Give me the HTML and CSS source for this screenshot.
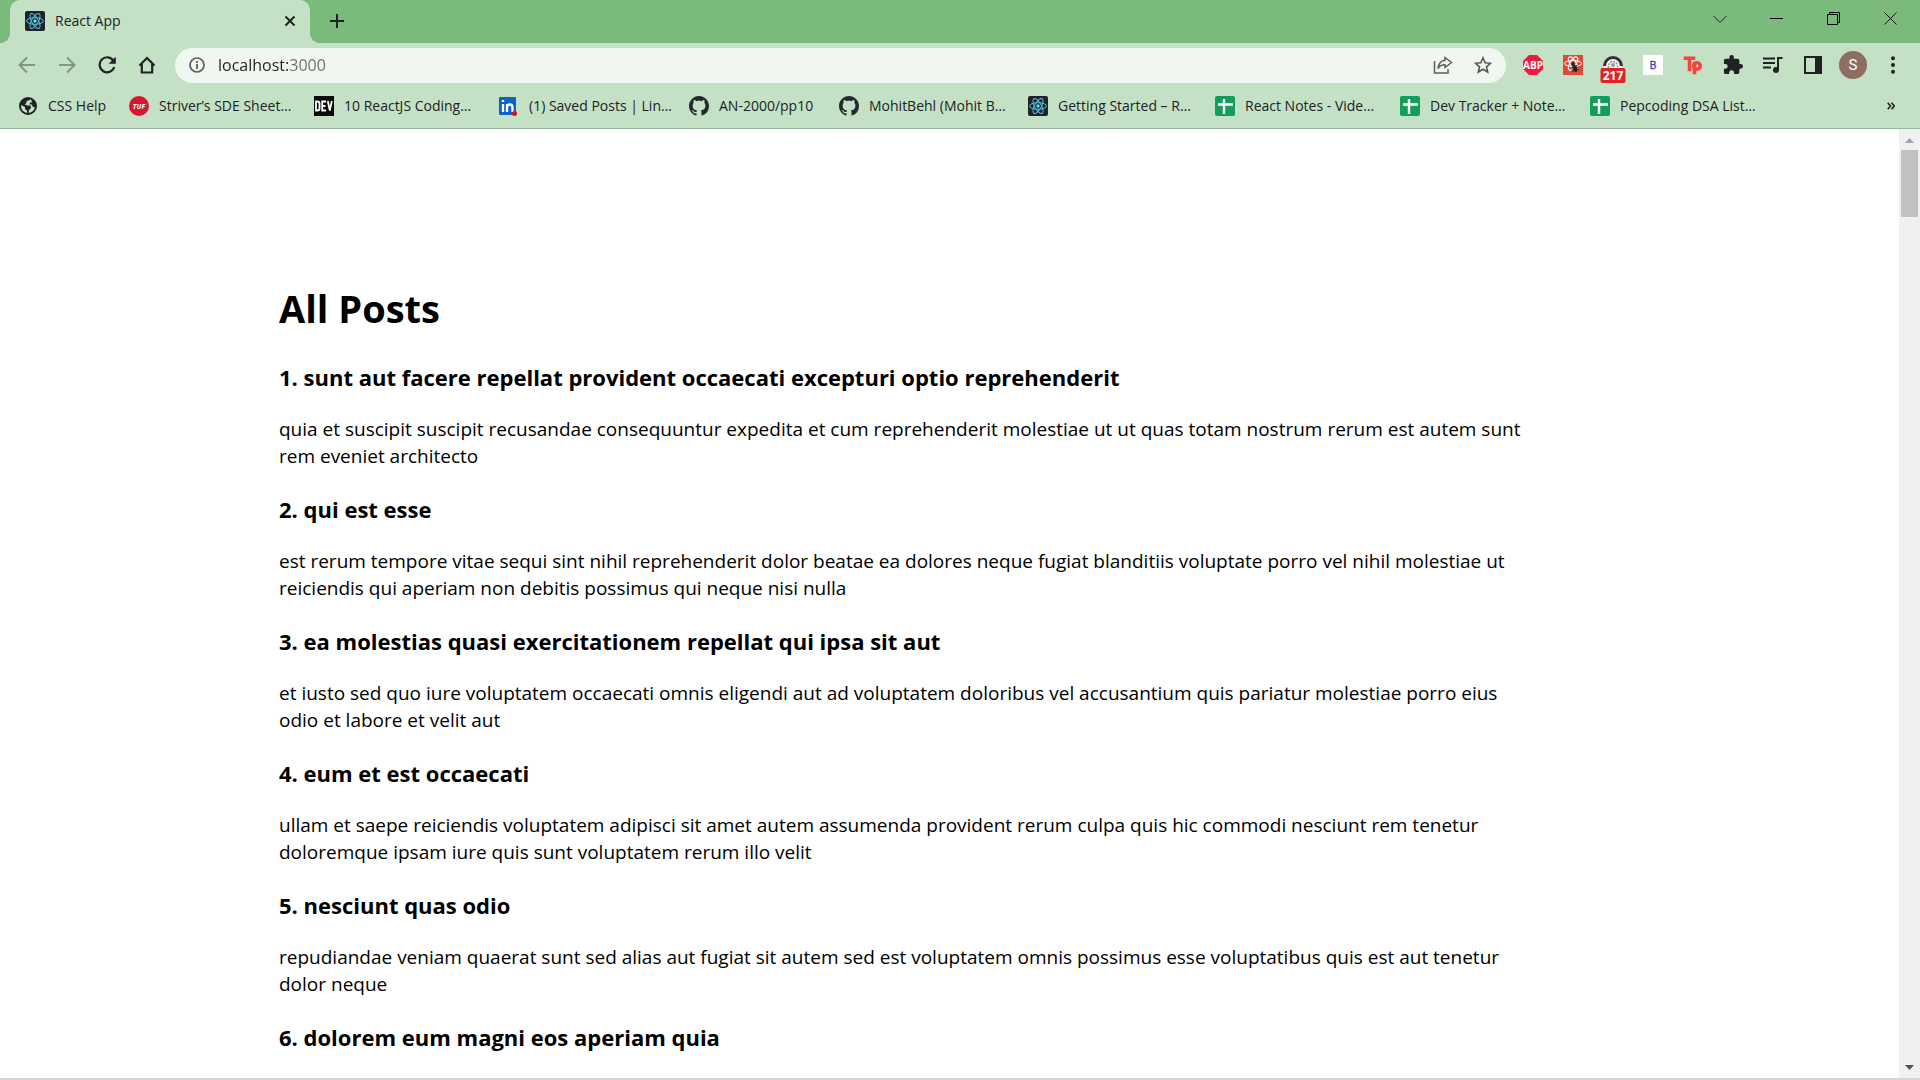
FILE: index.html
```html
<!DOCTYPE html>
<html lang="en">
<head>
<meta charset="utf-8">
<title>React App</title>
<link rel="stylesheet" href="styles.css">
</head>
<body>
<svg class="defs" width="0" height="0" aria-hidden="true">
  <symbol id="react" viewBox="0 0 20 20">
    <rect width="20" height="20" rx="2" fill="#20232a"/>
    <g fill="none" stroke="#53c1de" stroke-width="1">
      <ellipse cx="10" cy="10" rx="8.4" ry="3.3"/>
      <ellipse cx="10" cy="10" rx="8.4" ry="3.3" transform="rotate(60 10 10)"/>
      <ellipse cx="10" cy="10" rx="8.4" ry="3.3" transform="rotate(120 10 10)"/>
    </g>
    <circle cx="10" cy="10" r="1.7" fill="#61dafb"/>
  </symbol>
  <symbol id="github" viewBox="0 0 16 16">
    <path fill="#24292f" d="M8 0C3.58 0 0 3.58 0 8c0 3.54 2.29 6.53 5.47 7.59.4.07.55-.17.55-.38 0-.19-.01-.82-.01-1.49-2.01.37-2.53-.49-2.69-.94-.09-.23-.48-.94-.82-1.13-.28-.15-.68-.52-.01-.53.63-.01 1.08.58 1.23.82.72 1.21 1.87.87 2.33.66.07-.52.28-.87.51-1.07-1.78-.2-3.64-.89-3.64-3.95 0-.87.31-1.59.82-2.15-.08-.2-.36-1.02.08-2.12 0 0 .67-.21 2.2.82.64-.18 1.32-.27 2-.27s1.36.09 2 .27c1.53-1.04 2.2-.82 2.2-.82.44 1.1.16 1.92.08 2.12.51.56.82 1.27.82 2.15 0 3.07-1.87 3.75-3.65 3.95.29.25.54.73.54 1.48 0 1.07-.01 1.93-.01 2.2 0 .21.15.46.55.38A8.01 8.01 0 0 0 16 8c0-4.42-3.58-8-8-8z"/>
  </symbol>
  <symbol id="sheet" viewBox="0 0 20 20">
    <rect width="20" height="20" rx="2" fill="#129d58"/>
    <path d="M9 3v15M3 8.500h15" stroke="#fff" stroke-width="2.400" fill="none"/>
  </symbol>
</svg>

<header class="chrome">
  <div class="tabstrip">
    <div class="tab">
      <svg class="favicon"><use href="#react"/></svg>
      <span class="tab-title">React App</span>
      <button class="tab-close" aria-label="Close tab"><svg width="12" height="12" viewBox="0 0 12 12"><path d="M1.500 1.500l9 9M10.500 1.500l-9 9" stroke="#202124" stroke-width="2"/></svg></button>
    </div>
    <button class="new-tab" aria-label="New tab"><svg width="16" height="16" viewBox="0 0 16 16"><path d="M8 1v14M1 8h14" stroke="#202124" stroke-width="2"/></svg></button>
    <div class="window-controls">
      <button aria-label="Search tabs"><svg width="14" height="14" viewBox="0 0 14 14"><path d="M.5 4L7 10.500 13.500 4" fill="none" stroke="#202124"/></svg></button>
      <button aria-label="Minimize"><svg width="13" height="13" viewBox="0 0 13 13"><path d="M0 6.500h13" stroke="#000"/></svg></button>
      <button aria-label="Restore"><svg width="13" height="13" viewBox="0 0 13 13"><path d="M.5 2.500h10v10H.5zM2.500 2.500v-2h10v10h-2" fill="none" stroke="#000"/></svg></button>
      <button aria-label="Close"><svg width="13" height="13" viewBox="0 0 13 13"><path d="M.5.5l12 12M12.500.5l-12 12" stroke="#111"/></svg></button>
    </div>
  </div>

  <div class="toolbar">
    <nav class="nav-buttons">
      <button aria-label="Back"><svg width="18" height="18" viewBox="0 0 18 18" fill="none" stroke="#829684" stroke-width="2"><path d="M17 9H2M9 1.500L1.500 9 9 16.500"/></svg></button>
      <button aria-label="Forward"><svg width="18" height="18" viewBox="0 0 18 18" fill="none" stroke="#829684" stroke-width="2"><path d="M1 9h15M9 1.500L16.500 9 9 16.500"/></svg></button>
      <button aria-label="Reload"><svg width="18" height="18" viewBox="0 0 18 18"><path d="M15.500 4.800A7.500 7.500 0 1 0 16.300 11" fill="none" stroke="#202124" stroke-width="2.200"/><path d="M17.800.7v7.100h-7.100z" fill="#202124"/></svg></button>
      <button aria-label="Home"><svg width="18" height="18" viewBox="0 0 18 18"><path d="M1.500 9.500L9 2l7.500 7.500M3.800 8v8.500h10.400V8" fill="none" stroke="#202124" stroke-width="2.200"/></svg></button>
    </nav>
    <div class="omnibox">
      <svg width="16" height="16" viewBox="0 0 16 16"><circle cx="8" cy="8" r="7" fill="none" stroke="#5b5f63" stroke-width="1.700"/><path d="M8 7v5M8 4v2" stroke="#5b5f63" stroke-width="1.800"/></svg>
      <input class="address" type="text" value="localhost:3000" aria-label="Address">
      <button aria-label="Share"><svg width="20" height="18" viewBox="0 0 20 18" fill="none" stroke="#5b5f63" stroke-width="1.500"><path d="M1.500 5v12h13.500v-4"/><path d="M12 1.500l6.500 5-6.500 5V8.800C8.500 8.800 6.500 10 5 12.500 5.300 7.500 8.500 4.500 12 4.300z"/></svg></button>
      <button aria-label="Bookmark this tab"><svg width="18" height="18" viewBox="0 0 18 18"><path d="M9 1.800l2.200 5 5.300.5-4 3.500 1.200 5.200L9 13.200 4.300 16l1.200-5.200-4-3.500 5.300-.5z" fill="none" stroke="#54585c" stroke-width="1.600"/></svg></button>
    </div>
    <div class="extensions">
      <button aria-label="Adblock Plus"><svg width="22" height="22" viewBox="0 0 22 22"><path d="M7 1h8l6 6v8l-6 6H7l-6-6V7z" fill="#ee1b3f"/><text x="11" y="14.500" class="mark" font-size="10" fill="#fff">ABP</text></svg></button>
      <button aria-label="React debugging tools"><svg width="22" height="22" viewBox="0 0 22 22"><rect x="1" y="1" width="20" height="20" fill="#dd4b39"/><g fill="none" stroke="#fff" stroke-width="1"><ellipse cx="11" cy="9.500" rx="8.500" ry="3"/><ellipse cx="11" cy="9.500" rx="7.500" ry="3" transform="rotate(60 11 9.500)"/><ellipse cx="11" cy="9.500" rx="7.500" ry="3" transform="rotate(120 11 9.500)"/></g><ellipse cx="13" cy="14.500" rx="2.300" ry="3.500" fill="#222" transform="rotate(-25 13 14.500)"/><circle cx="11" cy="10" r="1.700" fill="#222"/><path d="M9 13.500l7-2M10 17.500l7-2.500M9.500 16l7-3" stroke="#222" stroke-width=".8"/></svg></button>
      <button aria-label="Blocked requests"><svg class="counter" width="26" height="28" viewBox="0 0 26 28"><path d="M4 14v-3a9 9 0 0 1 18 0v3z" fill="#f4f4f4"/><path d="M4.500 11a8.500 8.500 0 0 1 17 0" fill="none" stroke="#333" stroke-width="3"/><path d="M8.500 13v-2a4.500 4.500 0 0 1 9 0v2" fill="none" stroke="#999" stroke-width="1.500" stroke-dasharray="2 1"/><circle cx="13" cy="10" r="2" fill="#999"/><rect x=".5" y="13" width="25" height="15" rx="2" fill="#df2326"/><text x="13" y="25" class="mark" font-size="12" fill="#fff">217</text></svg></button>
      <button aria-label="B extension"><svg width="22" height="22" viewBox="0 0 22 22"><rect x="1" y="1" width="20" height="20" fill="#fff"/><text x="11" y="14.500" class="letter" font-size="10" fill="#4038b8" stroke="#4038b8" stroke-width=".3">B</text></svg></button>
      <button aria-label="Tp extension"><svg width="20" height="20" viewBox="0 0 20 20" fill="none" stroke="#f4443e" stroke-width="3.600" stroke-linecap="square"><path d="M2.500 3.200h8M6.500 4v10.500M11.500 8.500v9"/><circle cx="14" cy="11" r="3.200"/></svg></button>
      <button aria-label="Extensions"><svg width="20" height="20" viewBox="1 1 22 22"><path fill="#202124" d="M20.500 11H19V7c0-1.100-.9-2-2-2h-4V3.500a2.500 2.500 0 0 0-5 0V5H4c-1.100 0-2 .9-2 2v3.800h1.500a2.700 2.700 0 0 1 0 5.400H2V20c0 1.100.9 2 2 2h3.800v-1.500a2.700 2.700 0 0 1 5.400 0V22H17c1.100 0 2-.9 2-2v-4h1.500a2.500 2.500 0 0 0 0-5z"/></svg></button>
      <button aria-label="Media controls"><svg width="20" height="18" viewBox="0 0 20 18"><path d="M0 2.500h12M0 7h12M0 11.500h8" stroke="#202124" stroke-width="1.800"/><path d="M15 14V2h4.500" fill="none" stroke="#202124" stroke-width="2"/><circle cx="13" cy="14" r="3" fill="#202124"/></svg></button>
      <button aria-label="Side panel"><svg width="18" height="18" viewBox="0 0 18 18"><path d="M1 1h16v16H1z" fill="none" stroke="#202124" stroke-width="2"/><path d="M11 1h6v16h-6z" fill="#202124"/></svg></button>
      <button aria-label="Profile"><span class="avatar">S</span></button>
      <button aria-label="Menu"><svg width="4" height="18" viewBox="0 0 4 18" fill="#202124"><circle cx="2" cy="2.200" r="2"/><circle cx="2" cy="9" r="2"/><circle cx="2" cy="15.800" r="2"/></svg></button>
    </div>
  </div>

  <nav class="bookmarks">
    <a href="#"><svg class="favicon" viewBox="0 0 20 20"><circle cx="10" cy="10" r="8" fill="#c5e1c5" stroke="#202124" stroke-width="2"/><path fill="#202124" d="M2 8.500C3 4.500 6 2 10 2c1 0 2 .2 2.500.6L11 4.500 8.500 5v2L6.800 8.500l2.700 1h3l.5 2.500-2 2-.5 3.500H9v-3l-2-1.500V11zM13 3l4 3 1 4-1 1.500-2.500-1L14 8.500h-2.500L12 6.500h2z"/></svg><span>CSS Help</span></a>
    <a href="#"><svg class="favicon" viewBox="0 0 20 20"><circle cx="10" cy="10" r="10" fill="#d7172f"/><text x="10" y="12.600" class="mark" font-size="7" font-style="italic" fill="#fff">TUF</text></svg><span>Striver’s SDE Sheet…</span></a>
    <a href="#"><svg class="favicon" viewBox="0 0 20 20"><rect width="20" height="20" fill="#0a0a0a"/><path d="M2 5.500h1.500q2 0 2 2v5q0 2-2 2H2zM12 5.500H8.200v9H12M8.200 10h3.300M13.800 5l2 9.500 2-9.500" fill="none" stroke="#fff" stroke-width="1.800"/></svg><span>10 ReactJS Coding…</span></a>
    <a href="#"><svg class="favicon" viewBox="0 0 20 20"><rect y="1" width="17" height="18" rx="1" fill="#0a66c2"/><path d="M4 8v8M4 4v2M8 16V8M8 11.500c0-4 5.500-4 5.500 0V16" fill="none" stroke="#fff" stroke-width="2.300"/><circle cx="15.500" cy="17.500" r="2.500" fill="#d61313"/></svg><span>(1) Saved Posts | Lin…</span></a>
    <a href="#"><svg class="favicon"><use href="#github"/></svg><span>AN-2000/pp10</span></a>
    <a href="#"><svg class="favicon"><use href="#github"/></svg><span>MohitBehl (Mohit B…</span></a>
    <a href="#"><svg class="favicon"><use href="#react"/></svg><span>Getting Started – R…</span></a>
    <a href="#"><svg class="favicon"><use href="#sheet"/></svg><span>React Notes - Vide…</span></a>
    <a href="#"><svg class="favicon"><use href="#sheet"/></svg><span>Dev Tracker + Note…</span></a>
    <a href="#"><svg class="favicon"><use href="#sheet"/></svg><span>Pepcoding DSA List…</span></a>
    <button class="overflow" aria-label="More bookmarks"><svg width="8" height="8" viewBox="0 0 8 8"><path d="M.7.7L3.500 4 .7 7.300M4.500.7L7.300 4 4.500 7.300" fill="none" stroke="#202124" stroke-width="1.600"/></svg></button>
  </nav>
</header>

<div class="viewport">
  <main class="page">
    <h1>All Posts</h1>
    <article>
      <h3>1. sunt aut facere repellat provident occaecati excepturi optio reprehenderit</h3>
      <p>quia et suscipit suscipit recusandae consequuntur expedita et cum reprehenderit molestiae ut ut quas totam nostrum rerum est autem sunt rem eveniet architecto</p>
    </article>
    <article>
      <h3>2. qui est esse</h3>
      <p>est rerum tempore vitae sequi sint nihil reprehenderit dolor beatae ea dolores neque fugiat blanditiis voluptate porro vel nihil molestiae ut reiciendis qui aperiam non debitis possimus qui neque nisi nulla</p>
    </article>
    <article>
      <h3>3. ea molestias quasi exercitationem repellat qui ipsa sit aut</h3>
      <p>et iusto sed quo iure voluptatem occaecati omnis eligendi aut ad voluptatem doloribus vel accusantium quis pariatur molestiae porro eius odio et labore et velit aut</p>
    </article>
    <article>
      <h3>4. eum et est occaecati</h3>
      <p>ullam et saepe reiciendis voluptatem adipisci sit amet autem assumenda provident rerum culpa quis hic commodi nesciunt rem tenetur doloremque ipsam iure quis sunt voluptatem rerum illo velit</p>
    </article>
    <article>
      <h3>5. nesciunt quas odio</h3>
      <p>repudiandae veniam quaerat sunt sed alias aut fugiat sit autem sed est voluptatem omnis possimus esse voluptatibus quis est aut tenetur dolor neque</p>
    </article>
    <article>
      <h3>6. dolorem eum magni eos aperiam quia</h3>
    </article>
  </main>
  <div class="scrollbar">
    <svg width="9" height="5" viewBox="0 0 9 5"><path d="M0 5l4.500-5L9 5z" fill="#a3a3a3"/></svg>
    <div class="thumb"></div>
    <svg class="down" width="9" height="5" viewBox="0 0 9 5"><path d="M0 0l4.500 5L9 0z" fill="#505050"/></svg>
  </div>
</div>
</body>
</html>
```
FILE: styles.css
```css
* { box-sizing: border-box; }

body {
  margin: 0;
  height: 100vh;
  display: flex;
  flex-direction: column;
  overflow: hidden;
  background: #fff;
  border-bottom: 2px solid #d6d6d6;
  font-family: "Segoe UI", "Open Sans", "Noto Sans", sans-serif;
  color: #000;
}

button {
  display: flex;
  align-items: center;
  justify-content: center;
  padding: 0;
  border: 0;
  background: none;
  font: inherit;
}

svg { display: block; flex: none; }
.defs { position: absolute; }
.favicon { width: 20px; height: 20px; }
.mark { font-family: "Open Sans", sans-serif; font-weight: 700; text-anchor: middle; }
.letter { font-family: "Liberation Sans", sans-serif; text-anchor: middle; }

.chrome {
  flex: none;
  background: #c5e1c5;
  border-bottom: 1px solid #9db59d;
}

/* Tab strip */
.tabstrip {
  display: flex;
  height: 43px;
  padding: 0 1px 0 10px;
  background: #7abb7b;
}
.tab {
  position: relative;
  display: flex;
  align-items: center;
  width: 300px;
  padding: 0 12px 1px 15px;
  border-radius: 10px 10px 0 0;
  background: #c5e1c5;
}
.tab::before,
.tab::after {
  content: "";
  position: absolute;
  bottom: 0;
  width: 10px;
  height: 10px;
}
.tab::before { right: 100%; background: radial-gradient(circle at 0 0, #7abb7b 10px, #c5e1c5 10px); }
.tab::after { left: 100%; background: radial-gradient(circle at 100% 0, #7abb7b 10px, #c5e1c5 10px); }
.tab-title { flex: 1; padding-left: 10px; font-size: 14px; line-height: 20px; color: #202124; }
.tab-close { width: 16px; height: 16px; }
.new-tab { width: 34px; margin-left: 10px; padding-bottom: 1px; }
.window-controls { display: flex; height: 37px; margin-left: auto; }
.window-controls button { width: 57px; }

/* Toolbar */
.toolbar { display: flex; align-items: center; height: 44px; padding-right: 7px; }
.nav-buttons { display: flex; padding: 0 8px 0 7px; }
.nav-buttons button { width: 40px; height: 36px; }
.omnibox {
  flex: 1;
  display: flex;
  align-items: center;
  height: 35px;
  padding: 0 3px 0 14px;
  border-radius: 18px;
  background: #eff7f0;
}
.omnibox button { width: 40px; height: 32px; }
.address {
  flex: 1;
  min-width: 0;
  height: 28px;
  margin-left: 13px;
  padding: 0;
  border: 0;
  outline: 0;
  font: 16px/28px "Segoe UI", "Open Sans", sans-serif;
  background: linear-gradient(90deg, #202124 72px, #6a6f6c 72px);
  -webkit-background-clip: text;
  background-clip: text;
  color: transparent;
}
.extensions { display: flex; align-items: center; padding-left: 7px; }
.extensions button { width: 40px; height: 36px; }
.counter { align-self: flex-end; }
.avatar {
  width: 28px;
  height: 28px;
  border-radius: 50%;
  background: #8d6e63;
  color: #fff;
  font: 15px/28px Roboto, sans-serif;
  text-align: center;
}

/* Bookmarks */
.bookmarks {
  display: grid;
  grid-template-columns: 111px 185px 185px 190px 150px 189px 187px 185px 190px 1fr 20px;
  align-items: center;
  height: 41px;
  padding: 0 19px 4px 18px;
}
.bookmarks a {
  display: flex;
  align-items: center;
  gap: 10px;
  color: #202124;
  font-size: 14px;
  line-height: 20px;
  text-decoration: none;
  white-space: nowrap;
}

/* Page */
.viewport { flex: 1; min-height: 0; display: flex; overflow: hidden; }
.page { flex: 1; padding: 153px 19% 0 279px; }
.page h1 { margin: 0 0 26px; font-size: 38px; line-height: 53px; }
.page h3 { margin: 0 0 23px; font-size: 22px; line-height: 32px; }
.page p { margin: 0 0 23px; font-size: 19px; line-height: 27px; }

.scrollbar {
  flex: none;
  display: flex;
  flex-direction: column;
  align-items: center;
  width: 21px;
  padding: 9px 0 8px;
  background: #f0f0f0;
}
.thumb { width: 17px; height: 67px; margin-top: 7px; background: #c1c1c1; }
.down { margin-top: auto; }
```
